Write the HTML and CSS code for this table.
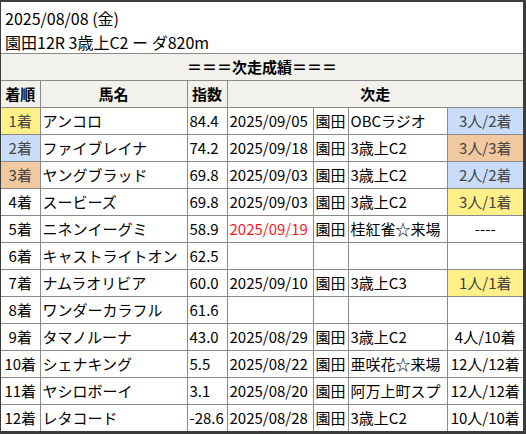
FILE: index.html
```html
<!DOCTYPE html>
<html lang="ja">
<head>
<meta charset="utf-8">
<link rel="stylesheet" href="styles.css">
</head>
<body>
<div class="frame">
  <div class="title">
    <div>2025/08/08 (金)</div>
    <div>園田12R 3歳上C2 ー ダ820m</div>
  </div>
  <table class="res">
    <colgroup>
      <col class="c1"><col class="c2"><col class="c3"><col class="c4"><col class="c5"><col class="c6"><col class="c7">
    </colgroup>
    <tr class="hd"><th colspan="7" class="banner">＝＝＝次走成績＝＝＝</th></tr>
    <tr class="hd"><th>着順</th><th>馬名</th><th>指数</th><th colspan="4">次走</th></tr>
    <tr><td class="rk y">1着</td><td>アンコロ</td><td>84.4</td><td>2025/09/05</td><td>園田</td><td>OBCラジオ</td><td class="r b">3人/2着</td></tr>
    <tr><td class="rk b">2着</td><td>ファイブレイナ</td><td>74.2</td><td>2025/09/18</td><td>園田</td><td>3歳上C2</td><td class="r o">3人/3着</td></tr>
    <tr><td class="rk o">3着</td><td>ヤングブラッド</td><td>69.8</td><td>2025/09/03</td><td>園田</td><td>3歳上C2</td><td class="r b">2人/2着</td></tr>
    <tr><td class="rk">4着</td><td>スービーズ</td><td>69.8</td><td>2025/09/03</td><td>園田</td><td>3歳上C2</td><td class="r y">3人/1着</td></tr>
    <tr><td class="rk">5着</td><td>ニネンイーグミ</td><td>58.9</td><td class="red">2025/09/19</td><td>園田</td><td>桂紅雀☆来場</td><td class="r">----</td></tr>
    <tr><td class="rk">6着</td><td>キャストライトオン</td><td>62.5</td><td></td><td></td><td></td><td class="r"></td></tr>
    <tr><td class="rk">7着</td><td>ナムラオリビア</td><td>60.0</td><td>2025/09/10</td><td>園田</td><td>3歳上C3</td><td class="r y">1人/1着</td></tr>
    <tr><td class="rk">8着</td><td>ワンダーカラフル</td><td>61.6</td><td></td><td></td><td></td><td class="r"></td></tr>
    <tr><td class="rk">9着</td><td>タマノルーナ</td><td>43.0</td><td>2025/08/29</td><td>園田</td><td>3歳上C2</td><td class="r">4人/10着</td></tr>
    <tr><td class="rk">10着</td><td>シェナキング</td><td>5.5</td><td>2025/08/22</td><td>園田</td><td>亜咲花☆来場</td><td class="r">12人/12着</td></tr>
    <tr><td class="rk">11着</td><td>ヤシロボーイ</td><td>3.1</td><td>2025/08/20</td><td>園田</td><td>阿万上町スプ</td><td class="r">12人/12着</td></tr>
    <tr><td class="rk">12着</td><td>レタコード</td><td>-28.6</td><td>2025/08/28</td><td>園田</td><td>3歳上C2</td><td class="r">10人/10着</td></tr>
  </table>
</div>
</body>
</html>
```
FILE: styles.css
```css
html, body {
  margin: 0;
  padding: 0;
  background: #3c3c3c;
}
.frame {
  margin: 2px 3px 3px 1px;
  width: 522px;
  height: 429px;
  background: #ffffff;
  overflow: hidden;
  font-family: "Noto Sans CJK JP", "Noto Sans", sans-serif;
  font-size: 15px;
  color: #000;
}
.title {
  padding: 4px 4px 0 4px;
  font-size: 16px;
  line-height: 24px;
  height: 47px;
}
.res {
  border-collapse: collapse;
  table-layout: fixed;
  width: 522px;
}
.c1 { width: 39px; }
.c2 { width: 147px; }
.c3 { width: 40px; }
.c4 { width: 86px; }
.c5 { width: 35px; }
.c6 { width: 99px; }
.c7 { width: 76px; }
.res th, .res td {
  border: 1px solid #8a8a8a;
  height: 26px;
  padding: 0 2px;
  white-space: nowrap;
  overflow: hidden;
  line-height: 20px;
  text-align: left;
}
.res tr > :first-child { border-left: none; }
.res tr > :last-child { border-right: none; }
.res th {
  background: #f2f1ec;
  font-weight: bold;
  text-align: center;
}
.res .rk { text-align: center; padding: 0; }
.res .r { text-align: center; padding: 0; }
.res .y { background: #fff08a; color: #444; }
.res .b { background: #c9dcfa; color: #444; }
.res .o { background: #f0c9a0; color: #444; }
.res .red { color: #ff1a1a; }
```
